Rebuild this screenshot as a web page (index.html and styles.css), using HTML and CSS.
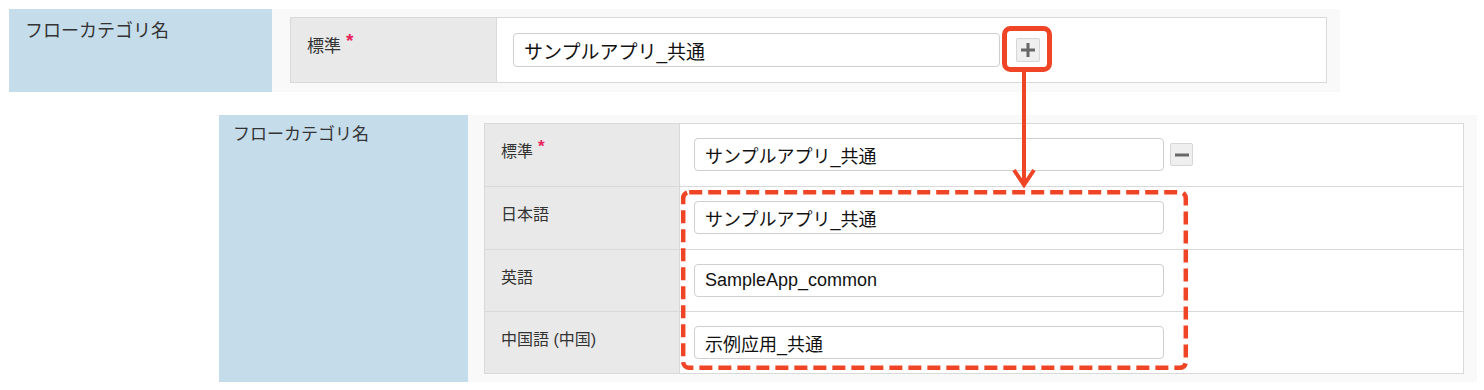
FILE: index.html
```html
<!DOCTYPE html>
<html lang="ja">
<head>
  <meta charset="UTF-8">
  <meta name="viewport" content="width=device-width, initial-scale=1.0">
  <title>フローカテゴリ名</title>
  <link rel="stylesheet" href="styles.css">
</head>
<body>
  <!-- 追加前 -->
  <div class="block block-top">
    <div class="name">フローカテゴリ名</div>
    <div class="panel">
      <div class="tbl">
        <div class="row">
          <div class="label">標準<span class="req">*</span></div>
          <div class="value">
            <input class="field" type="text" value="サンプルアプリ_共通" readonly>
            <span class="btn">
              <svg width="16" height="16" viewBox="0 0 16 16"><path d="M8 1v14M1 8h14" stroke="#686868" stroke-width="3"/></svg>
            </span>
          </div>
        </div>
      </div>
    </div>
  </div>

  <!-- 追加後 -->
  <div class="block block-bottom">
    <div class="name">フローカテゴリ名</div>
    <div class="panel">
      <div class="tbl">
        <div class="row">
          <div class="label">標準<span class="req">*</span></div>
          <div class="value">
            <input class="field" type="text" value="サンプルアプリ_共通" readonly>
            <span class="btn">
              <svg width="16" height="16" viewBox="0 0 16 16"><path d="M1 8h14" stroke="#686868" stroke-width="3"/></svg>
            </span>
          </div>
        </div>
        <div class="row">
          <div class="label">日本語</div>
          <div class="value"><input class="field" type="text" value="サンプルアプリ_共通" readonly></div>
        </div>
        <div class="row">
          <div class="label">英語</div>
          <div class="value"><input class="field" type="text" value="SampleApp_common" readonly></div>
        </div>
        <div class="row">
          <div class="label">中国語 (中国)</div>
          <div class="value"><input class="field" type="text" value="示例应用_共通" readonly></div>
        </div>
      </div>
    </div>
  </div>

  <!-- 注釈 -->
  <svg class="marks" width="1484" height="390" viewBox="0 0 1484 390">
    <rect x="1004.5" y="28.5" width="45" height="41" rx="6" fill="none" stroke="#ef4426" stroke-width="5"/>
    <path d="M1024 71V184" stroke="#ef4426" stroke-width="4"/>
    <path d="M1014 170L1024 185L1034 170" fill="none" stroke="#ef4426" stroke-width="4"/>
    <rect x="683.2" y="192.2" width="502.6" height="175.6" rx="6" fill="none" stroke="#ef4426" stroke-width="4.5" stroke-dasharray="13 6"/>
  </svg>
</body>
</html>
```

FILE: styles.css
```css
* {
  box-sizing: border-box;
}

body {
  position: relative;
  margin: 0;
  width: 1484px;
  height: 390px;
  background-color: #fff;
  font-family: "Liberation Sans", "Noto Sans CJK JP", sans-serif;
  color: #333;
  overflow: hidden;
}

.block {
  display: flex;
}

.name {
  background-color: #c5dcea;
  line-height: 24px;
}

.panel {
  background-color: #f9f9f9;
}

.tbl {
  border: 1px solid #d9d9d9;
  background-color: #fff;
}

.row {
  display: flex;
  border-bottom: 1px solid #d9d9d9;
}

.row:last-child {
  border-bottom: none;
}

.label {
  background-color: #e9e9e9;
  border-right: 1px solid #d9d9d9;
  line-height: 20px;
  padding: 18px 16px 0;
}

.req {
  color: #e8235c;
  font-weight: bold;
  position: relative;
  top: -5px;
  margin-left: 5px;
}

.value {
  display: flex;
  align-items: center;
  align-self: flex-start;
}

.field {
  border: 1px solid #cfcfcf;
  border-radius: 4px;
  padding: 0 10px;
  font-family: "Liberation Sans", "Noto Sans CJK JP", sans-serif;
  color: #111;
  background-color: #fff;
  outline: none;
}

.btn {
  display: flex;
  align-items: center;
  justify-content: center;
  background-color: #efefef;
  border: 1px solid #d6d6d6;
  border-radius: 2px;
}

/* 上のブロック */
.block-top {
  margin: 9px 0 0 9px;
}

.block-top .name {
  width: 263px;
  height: 83px;
  padding: 10px 16px;
  font-size: 18px;
}

.block-top .panel {
  width: 1068px;
  height: 83px;
  padding: 8px 0 0 18px;
}

.block-top .tbl {
  width: 1037px;
  height: 66px;
}

.block-top .label {
  width: 206px;
  height: 64px;
  font-size: 17px;
}

.block-top .req {
  font-size: 19px;
}

.block-top .value {
  padding: 15px 16px;
}

.block-top .field {
  width: 487px;
  height: 34px;
  font-size: 19px;
}

.block-top .btn {
  width: 24px;
  height: 24px;
  margin-left: 16px;
}

/* 下のブロック */
.block-bottom {
  margin: 23px 0 0 219px;
}

.block-bottom .name {
  width: 249px;
  height: 267px;
  padding: 8px 14px;
  font-size: 17px;
}

.block-bottom .panel {
  width: 1009px;
  height: 267px;
  padding: 8px 0 0 16px;
}

.block-bottom .tbl {
  width: 980px;
}

.block-bottom .row {
  height: 63px;
}

.block-bottom .row:nth-child(3) {
  height: 62px;
}

.block-bottom .row:last-child {
  height: 61px;
}

.block-bottom .label {
  width: 195px;
  font-size: 16px;
}

.block-bottom .req {
  font-size: 17px;
}

.block-bottom .value {
  padding: 14px 14px;
}

.block-bottom .field {
  width: 470px;
  height: 33px;
  font-size: 18px;
}

.block-bottom .btn {
  width: 23px;
  height: 23px;
  margin-left: 6px;
}

.marks {
  position: absolute;
  top: 0;
  left: 0;
  pointer-events: none;
}
```
